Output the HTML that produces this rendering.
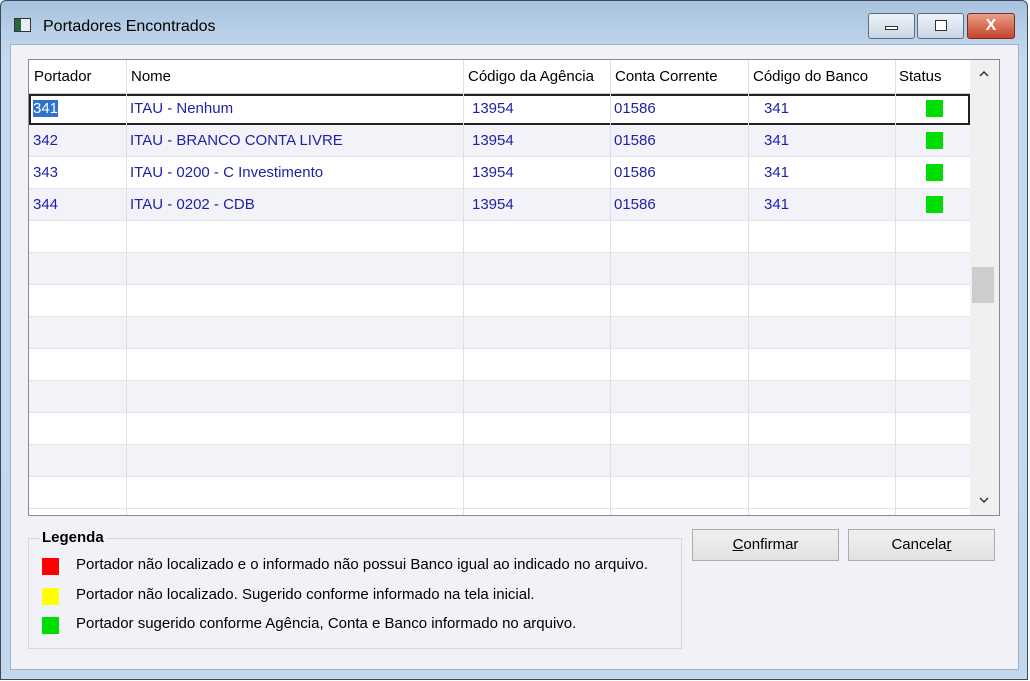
<!DOCTYPE html>
<html><head><style>
*{margin:0;padding:0;box-sizing:border-box}
body{width:1030px;height:681px;overflow:hidden;background:#fff;font-family:"Liberation Sans",sans-serif;font-size:15px;position:relative}
.win{position:absolute;left:0;top:0;width:1028px;height:680px;border:1px solid #3a4a5a;border-radius:6px 6px 0 0;background:linear-gradient(#a9c3de 0,#bcd3ea 40px,#c6daee 60px,#c4d8ec 100%)}
.title{position:absolute;left:42px;top:17px;font-size:16px;color:#000}
.ico{position:absolute;left:13px;top:17px;width:17px;height:14px;border:1px solid #333;background:linear-gradient(90deg,#2a6a3a 0 6px,#e8eef4 6px)}
.btn{position:absolute;top:12px;height:26px;border:1px solid #5b6d82;border-radius:3px;background:linear-gradient(#eef3f9,#c9d6e6)}
.client{position:absolute;left:9px;top:43px;width:1009px;height:626px;background:#f1f2f7;border:1px solid #9fb3c8}
.grid{position:absolute;left:28px;top:59px;width:972px;height:457px;background:#fff;border:1px solid #8a8a8a;overflow:hidden}
.row{position:absolute;left:0;width:941px;height:32px;border-bottom:1px solid #e4e4e8}
.alt{background:#f2f3f8}
.vl{position:absolute;top:0;width:1px;height:457px;background:#e0e0e4}
.c{position:absolute;top:6px;color:#1f1fa8;white-space:nowrap}
.h{position:absolute;top:8px;color:#000;white-space:nowrap}
.sq{position:absolute;left:897px;width:17px;height:17px;background:#00dd00}
.sb{position:absolute;left:941px;top:0;width:29px;height:455px;background:#f0f0f0}
.legend{position:absolute;left:28px;top:538px;width:654px;height:111px;border:1px solid #d6d8de}
.lt{position:absolute;left:40px;top:529px;background:#f1f2f7;font-weight:bold;padding:0 2px}
.lg{position:absolute;left:76px;color:#000}
.ls{position:absolute;left:42px;width:17px;height:17px}
.b{position:absolute;top:529px;width:147px;height:32px;border:1px solid #adadad;background:linear-gradient(#f0f0f0,#e2e2e2);text-align:center;line-height:30px;color:#000}
</style></head><body>
<div class="win">
<div class="ico"></div>
<div class="title">Portadores Encontrados</div>
<div class="btn" style="left:867px;width:47px"><div style="position:absolute;left:16px;top:12px;width:13px;height:4px;border:1px solid #333;background:#fff"></div></div>
<div class="btn" style="left:916px;width:47px"><div style="position:absolute;left:17px;top:6px;width:12px;height:11px;border:1px solid #333;background:#fff"></div></div>
<div class="btn" style="left:966px;width:48px;background:linear-gradient(#e8a08a,#c8422a);border-color:#7a2a20;color:#fff;font-weight:bold;text-align:center;line-height:24px;font-size:16px">X</div>
<div class="client"></div>
</div>
<div class="grid">
<div class="row" style="top:0;height:34px;border-bottom:1px solid #ccc"></div>
<div class="row" style="top:34px;height:31px;border:2px solid #222"></div>
<div class="row alt" style="top:65px"></div>
<div class="row" style="top:97px"></div>
<div class="row alt" style="top:129px"></div>
<div class="row" style="top:161px"></div>
<div class="row alt" style="top:193px"></div>
<div class="row" style="top:225px"></div>
<div class="row alt" style="top:257px"></div>
<div class="row" style="top:289px"></div>
<div class="row alt" style="top:321px"></div>
<div class="row" style="top:353px"></div>
<div class="row alt" style="top:385px"></div>
<div class="row" style="top:417px"></div>
<div class="vl" style="left:97px"></div><div class="vl" style="left:434px"></div><div class="vl" style="left:581px"></div><div class="vl" style="left:719px"></div><div class="vl" style="left:866px"></div>
<span class="h" style="left:5px">Portador</span><span class="h" style="left:102px">Nome</span><span class="h" style="left:439px">Código da Agência</span><span class="h" style="left:586px">Conta Corrente</span><span class="h" style="left:724px">Código do Banco</span><span class="h" style="left:870px">Status</span>
<div style="position:absolute;top:34px;left:0;width:941px">
<span class="c" style="left:4px;top:6px;background:#3070d0;color:#fff">341</span><span class="c" style="left:101px">ITAU - Nenhum</span><span class="c" style="left:443px">13954</span><span class="c" style="left:585px">01586</span><span class="c" style="left:735px">341</span><div class="sq" style="top:6px"></div></div>
<div style="position:absolute;top:66px;left:0;width:941px">
<span class="c" style="left:4px">342</span><span class="c" style="left:101px">ITAU - BRANCO CONTA LIVRE</span><span class="c" style="left:443px">13954</span><span class="c" style="left:585px">01586</span><span class="c" style="left:735px">341</span><div class="sq" style="top:6px"></div></div>
<div style="position:absolute;top:98px;left:0;width:941px">
<span class="c" style="left:4px">343</span><span class="c" style="left:101px">ITAU - 0200 - C Investimento</span><span class="c" style="left:443px">13954</span><span class="c" style="left:585px">01586</span><span class="c" style="left:735px">341</span><div class="sq" style="top:6px"></div></div>
<div style="position:absolute;top:130px;left:0;width:941px">
<span class="c" style="left:4px">344</span><span class="c" style="left:101px">ITAU - 0202 - CDB</span><span class="c" style="left:443px">13954</span><span class="c" style="left:585px">01586</span><span class="c" style="left:735px">341</span><div class="sq" style="top:6px"></div></div>
<div class="sb">
<svg style="position:absolute;left:9px;top:10px" width="10" height="7"><path d="M1 6 L5 2 L9 6" stroke="#333" stroke-width="1.5" fill="none"/></svg>
<div style="position:absolute;left:2px;top:207px;width:22px;height:36px;background:#cdcdcd"></div>
<svg style="position:absolute;left:9px;top:437px" width="10" height="7"><path d="M1 1 L5 5 L9 1" stroke="#333" stroke-width="1.5" fill="none"/></svg>
</div>
</div>
<div class="legend"></div>
<div class="lt">Legenda</div>
<div class="ls" style="top:558px;background:#f00"></div><span class="lg" style="top:556px">Portador não localizado e o informado não possui Banco igual ao indicado no arquivo.</span>
<div class="ls" style="top:588px;background:#ff0"></div><span class="lg" style="top:586px">Portador não localizado. Sugerido conforme informado na tela inicial.</span>
<div class="ls" style="top:617px;background:#0d0"></div><span class="lg" style="top:615px">Portador sugerido conforme Agência, Conta e Banco informado no arquivo.</span>
<div class="b" style="left:692px"><u>C</u>onfirmar</div>
<div class="b" style="left:848px">Cancela<u>r</u></div>
</body></html>
